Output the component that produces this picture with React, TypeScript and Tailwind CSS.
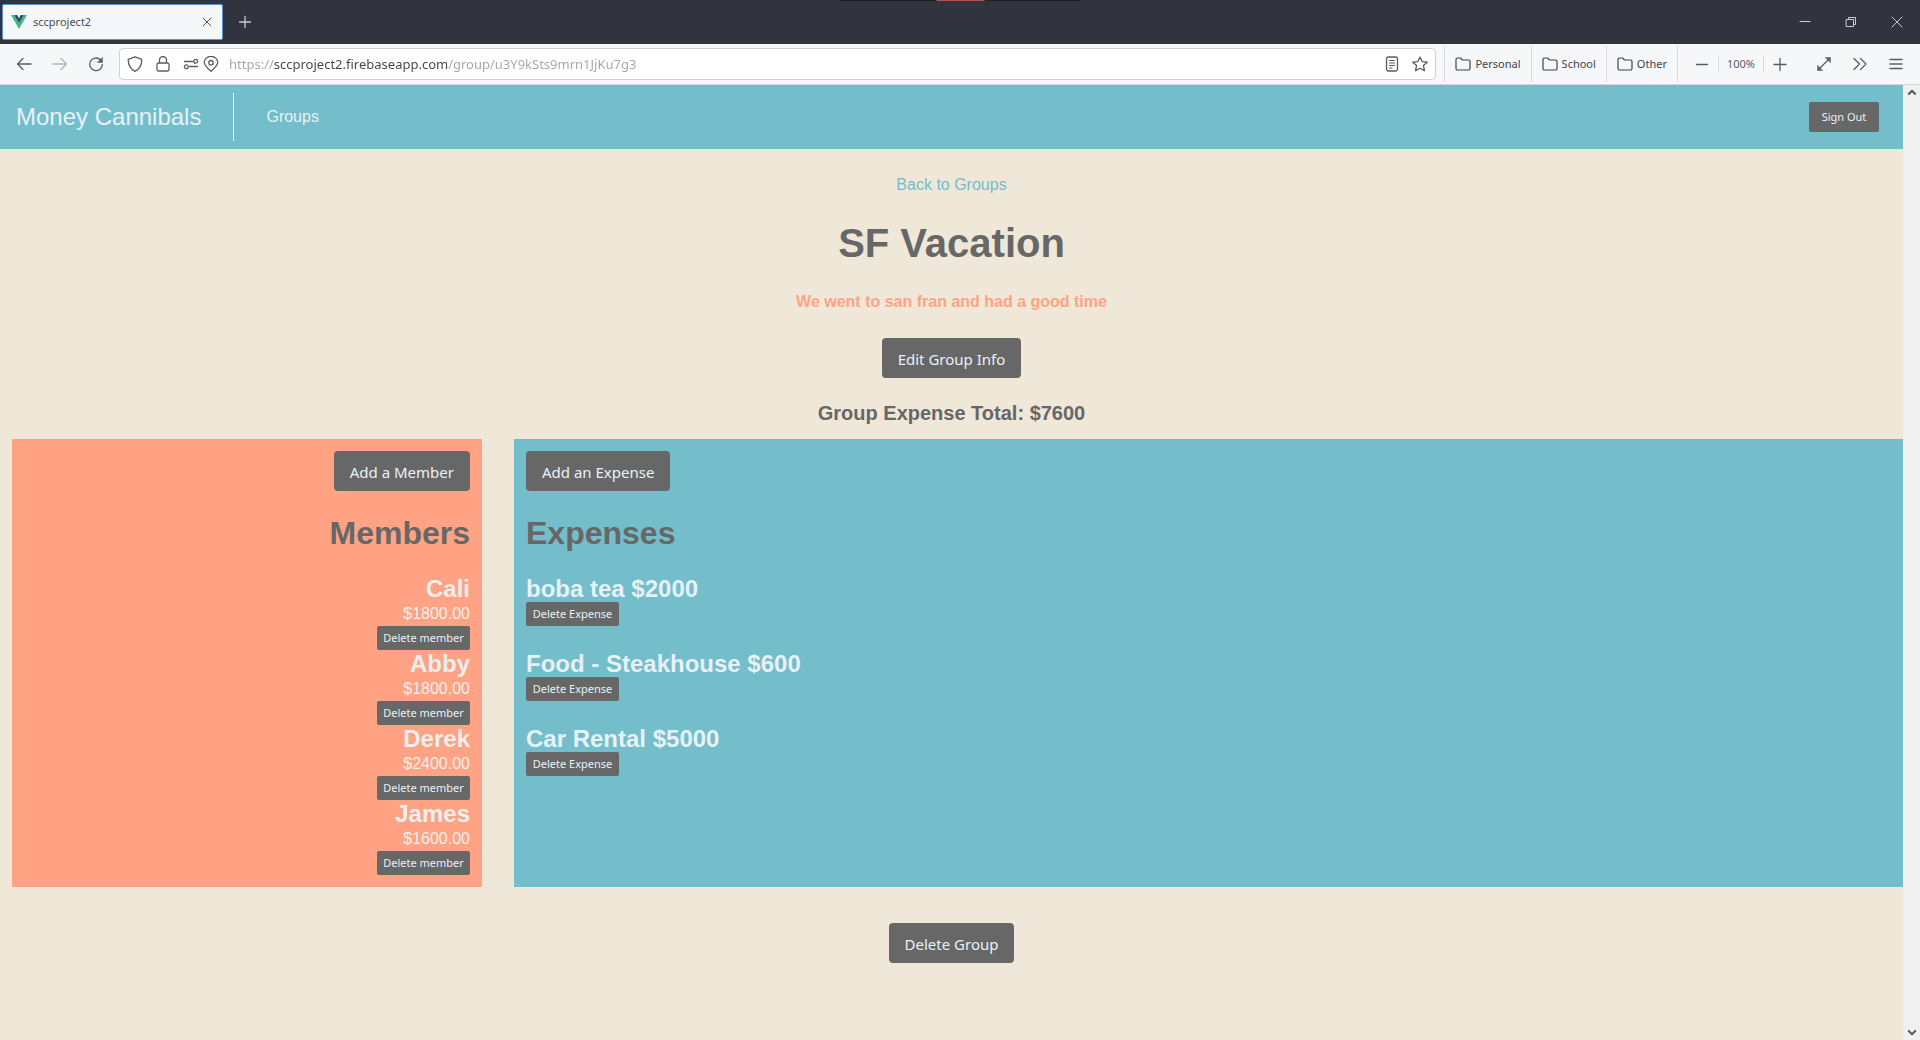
import React from "react";

const members = [
  { name: "Cali", amount: "$1800.00" },
  { name: "Abby", amount: "$1800.00" },
  { name: "Derek", amount: "$2400.00" },
  { name: "James", amount: "$1600.00" },
];

const expenses = ["boba tea $2000", "Food - Steakhouse $600", "Car Rental $5000"];

const folders = ["Personal", "School", "Other"];

type IconProps = { className?: string; children: React.ReactNode };

function Icon({ className = "size-4", children }: IconProps) {
  return (
    <svg
      viewBox="0 0 16 16"
      className={`shrink-0 ${className}`}
      fill="none"
      stroke="currentColor"
      strokeWidth="1.3"
      strokeLinecap="round"
      strokeLinejoin="round"
      aria-hidden="true"
    >
      {children}
    </svg>
  );
}

function TabBar() {
  return (
    <header className="relative flex h-11 items-center bg-[#31343f] text-[#c9cacd]">
      <div className="absolute left-1/2 top-0 flex h-px w-[241px] -translate-x-1/2 justify-center bg-[#1d2025]">
        <span className="h-px w-12 bg-[#a8584c]" />
      </div>
      <div className="ml-0.5 flex h-9 w-[221px] items-center rounded-xs border border-[#5b93d8] bg-[#f5f7f9] px-2 text-[#4a4b55]">
        <svg viewBox="0 0 16 14" className="h-3.5 w-4 shrink-0" aria-hidden="true">
          <path d="M0 0h3.2L8 8.3 12.8 0H16L8 14z" fill="#41b883" />
          <path d="M3.2 0h3L8 3.2 9.8 0h3L8 8.3z" fill="#35495e" />
        </svg>
        <span className="ml-1.5 flex-1 text-[11px]">sccproject2</span>
        <button aria-label="Close tab">
          <Icon className="size-3.5">
            <path d="M3.5 3.5l9 9M12.5 3.5l-9 9" strokeWidth="1.1" />
          </Icon>
        </button>
      </div>
      <button aria-label="New tab" className="ml-3.5">
        <Icon>
          <path d="M8 2.5v11M2.5 8h11" />
        </Icon>
      </button>
      <div className="ml-auto mr-[15px] flex items-center gap-[30px]">
        <button aria-label="Minimize">
          <Icon>
            <path d="M3 7.5h10" strokeWidth="1" />
          </Icon>
        </button>
        <button aria-label="Restore">
          <Icon>
            <path d="M3.5 5.5h7v7h-7zM5.5 5.5v-2h7v7h-2" strokeWidth="1" />
          </Icon>
        </button>
        <button aria-label="Close window">
          <Icon>
            <path d="M3 3l10 10M13 3L3 13" strokeWidth="1" />
          </Icon>
        </button>
      </div>
    </header>
  );
}

function Toolbar() {
  return (
    <div className="flex h-[41px] items-center border-b border-[#d2d6dc] bg-[#f5f7f9] text-[#5b5b66]">
      <button aria-label="Back" className="ml-4">
        <Icon>
          <path d="M15 8H1.5M7 2.5L1.5 8 7 13.5" />
        </Icon>
      </button>
      <button aria-label="Forward" disabled className="ml-5 text-[#b5b7bc]">
        <Icon>
          <path d="M1 8h13.5M9 2.5L14.5 8 9 13.5" />
        </Icon>
      </button>
      <button aria-label="Reload" className="ml-5">
        <Icon>
          <path d="M12.6 4A6.3 6.3 0 1 0 14.3 8.5" />
          <path d="M14.5 1.5v5h-5z" fill="currentColor" strokeWidth="0.5" />
        </Icon>
      </button>
      <div className="ml-[15px] flex h-8 flex-1 items-center rounded border border-[#cdd3db] bg-white px-[7px]">
        <Icon>
          <path d="M8 .8l6.8 2.5c0 5-1.2 9.4-6.8 12C2.400 12.7 1.2 8.3 1.2 3.3z" />
        </Icon>
        <Icon className="ml-3 size-4">
          <path d="M3.5 7h9A1.5 1.5 0 0 1 14 8.5v5a1.5 1.5 0 0 1-1.5 1.500h-9A1.5 1.5 0 0 1 2 13.5v-5A1.5 1.5 0 0 1 3.5 7zM4.500 7V4a3.5 3.5 0 0 1 7 0v3" />
        </Icon>
        <Icon className="ml-3 size-4">
          <path d="M1.5 5.5h8M6.500 10.5h8" />
          <circle cx="12.7" cy="5.2" r="1.9" />
          <circle cx="3.3" cy="10.7" r="1.9" />
        </Icon>
        <Icon className="ml-1 size-4">
          <path d="M8 15.3C4 11.5 1.3 9.5 1.3 6.5a6.700 6.200 0 0 1 13.4 0c0 3-2.700 5-6.700 8.8z" />
          <circle cx="8" cy="6.700" r="2.2" />
        </Icon>
        <input
          type="text"
          aria-label="Address"
          readOnly
          value="https://sccproject2.firebaseapp.com/group/u3Y9kSts9mrn1JjKu7g3"
          className="ml-2.5 h-7 flex-1 bg-[linear-gradient(90deg,#a3a4a8_45px,#42434d_45px,#42434d_218px,#a3a4a8_218px)] bg-clip-text text-[13px] text-transparent outline-none"
        />
        <button aria-label="Reader view">
          <Icon>
            <rect x="2.5" y="1" width="11" height="14" rx="1.8" />
            <path d="M5.500 4.500h5M5.500 7h5M5.500 9.500h5M5.500 12h2.500" strokeWidth="1.100" />
          </Icon>
        </button>
        <button aria-label="Bookmark" className="ml-3">
          <Icon>
            <path d="M8 1l2.100 4.600 5.100.6-3.800 3.400 1.100 5.200L8 12.300l-4.500 2.500 1.100-5.200L.8 6.200l5.100-.6z" />
          </Icon>
        </button>
      </div>
      <div className="ml-2 flex h-9 items-stretch border-l border-[#d6d9df]">
        {folders.map((name) => (
          <button key={name} className="flex items-center gap-1 border-r border-[#d6d9df] px-2.5 text-[11px] text-[#42434d]">
            <Icon>
              <path d="M1 12.5v-9A1.5 1.5 0 0 1 2.5 2h3l2 2h6A1.5 1.5 0 0 1 15 5.5v7a1.5 1.5 0 0 1-1.5 1.5h-11A1.5 1.5 0 0 1 1 12.5z" strokeWidth="1.2" />
            </Icon>
            {name}
          </button>
        ))}
      </div>
      <button aria-label="Zoom out" className="ml-4">
        <Icon>
          <path d="M2.5 8.5h11" />
        </Icon>
      </button>
      <button className="mx-2 border-x border-[#d6d9df] px-2 text-[11px] leading-4">100%</button>
      <button aria-label="Zoom in">
        <Icon>
          <path d="M2 8.5h12M8 2.5v12" />
        </Icon>
      </button>
      <button aria-label="Full screen" className="ml-7">
        <Icon>
          <path d="M3 13L13 3" />
          <path d="M9.5 1.5h5v5zM1.5 9.5v5h5z" fill="currentColor" strokeWidth="0.5" />
        </Icon>
      </button>
      <button aria-label="More tools" className="ml-5">
        <Icon>
          <path d="M2 2.5L7.5 8 2 13.5M8.5 2.5L14 8l-5.500 5.500" />
        </Icon>
      </button>
      <button aria-label="Menu" className="ml-5 mr-4">
        <Icon>
          <path d="M2 3.5h12M2 8h12M2 12.5h12" />
        </Icon>
      </button>
    </div>
  );
}

function Button({ children }: { children: React.ReactNode }) {
  return (
    <button className="h-10 rounded bg-[#676767] px-4 pt-0.5 font-['Noto_Sans','Open_Sans',sans-serif] text-[15px] text-[#e7f2f8]">
      {children}
    </button>
  );
}

function SmallButton({ children }: { children: React.ReactNode }) {
  return (
    <button className="h-6 w-[93px] rounded-xs bg-[#676767] font-['Noto_Sans','Open_Sans',sans-serif] text-[11px] text-[#e7f2f8]">
      {children}
    </button>
  );
}

function Page() {
  return (
    <div className="flex-1 bg-[#efe7d8] font-['Liberation_Sans',Arial,sans-serif] text-[16px] text-[#676767]">
      <nav className="flex h-16 items-center bg-[#74bdcb] px-4 text-[#e7f2f8]">
        <a href="#home" className="text-[24px]">
          Money Cannibals
        </a>
        <span className="mx-8 h-12 w-px bg-[#e7f2f8]" />
        <a href="#groups">Groups</a>
        <button className="ml-auto mr-2 h-[30px] w-[70px] rounded-xs bg-[#676767] font-['Noto_Sans','Open_Sans',sans-serif] text-[11px]">
          Sign Out
        </button>
      </nav>
      <main className="flex flex-col pt-6">
        <div className="flex flex-col items-center text-center">
          <a href="#groups" className="text-[#74bdcb]">
            Back to Groups
          </a>
          <h1 className="my-6 text-[40px] font-bold leading-[45px]">SF Vacation</h1>
          <p className="mb-6 font-bold text-[#ffa384]">We went to san fran and had a good time</p>
          <Button>Edit Group Info</Button>
          <h2 className="mb-[15px] mt-6 text-[20px] font-bold leading-[22px]">Group Expense Total: $7600</h2>
        </div>
        <div className="ml-3 grid grid-cols-[470fr_1389fr] gap-8">
          <section className="flex flex-col items-end bg-[#ffa384] p-3">
            <Button>Add a Member</Button>
            <h2 className="my-6 text-[32px] font-bold leading-9">Members</h2>
            <ul>
              {members.map((m) => (
                <li key={m.name} className="flex flex-col items-end text-[#efefef]">
                  <h3 className="text-[24px] font-bold leading-[27px]">{m.name}</h3>
                  <p className="leading-6">{m.amount}</p>
                  <SmallButton>Delete member</SmallButton>
                </li>
              ))}
            </ul>
          </section>
          <section className="flex flex-col items-start bg-[#74bdcb] p-3">
            <Button>Add an Expense</Button>
            <h2 className="my-6 text-[32px] font-bold leading-9">Expenses</h2>
            <ul className="flex flex-col gap-6">
              {expenses.map((e) => (
                <li key={e} className="flex flex-col items-start text-[#e7f2f8]">
                  <h3 className="text-[24px] font-bold leading-[27px]">{e}</h3>
                  <SmallButton>Delete Expense</SmallButton>
                </li>
              ))}
            </ul>
          </section>
        </div>
        <div className="mt-9 flex justify-center">
          <Button>Delete Group</Button>
        </div>
      </main>
    </div>
  );
}

export default function App() {
  return (
    <div className="flex min-h-screen flex-col font-['Noto_Sans','Open_Sans',sans-serif]">
      <TabBar />
      <Toolbar />
      <div className="flex flex-1">
        <Page />
        <div className="flex w-[17px] flex-col items-center justify-between bg-[#f0f0f0] pb-0.5 pt-0.5 text-[#555555]">
          <Icon className="size-3">
            <path d="M3 10l5-5 5 5" strokeWidth="2.5" strokeLinecap="butt" />
          </Icon>
          <Icon className="size-3">
            <path d="M3 6l5 5 5-5" strokeWidth="2.5" strokeLinecap="butt" />
          </Icon>
        </div>
      </div>
    </div>
  );
}
